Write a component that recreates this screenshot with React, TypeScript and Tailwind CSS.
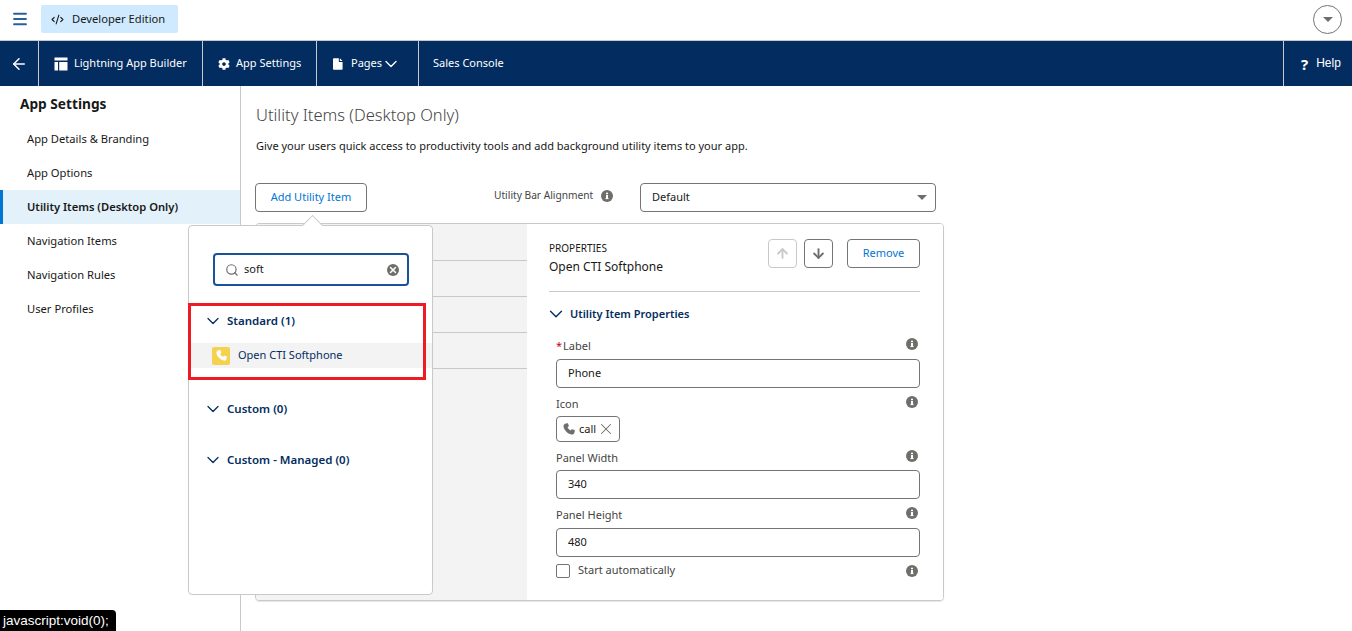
import React from "react";
import { ChevronDown, ArrowLeft, ArrowUp, ArrowDown, Search, X, Menu, CodeXml } from "lucide-react";
import { FaCog } from "react-icons/fa";

const Info = ({ className = "" }: { className?: string }) => (
  <svg viewBox="0 0 12 12" className={"w-3 h-3 shrink-0 " + className}>
    <circle cx="6" cy="6" r="6" fill="#706e6b" />
    <rect x="5" y="5" width="2" height="4" fill="#fff" />
    <rect x="4.4" y="8.2" width="3.2" height="0.9" fill="#fff" />
    <rect x="5" y="2.7" width="2" height="1.5" fill="#fff" />
  </svg>
);

const Phone = ({ className = "", fill = "#fff" }: { className?: string; fill?: string }) => (
  <svg viewBox="0 0 24 24" className={className}>
    <path fill={fill} d="M6.6 2.5 9.3 2c.5 0 .9.2 1.1.7l1.2 3.6c.2.4 0 .9-.3 1.2L9.500 9.200c.9 2.200 2.900 4.300 5.200 5.300l1.700-1.800c.3-.3.8-.4 1.200-.3l3.700 1.200c.4.2.7.6.7 1.100l-.5 2.700c-.6 3.200-3.200 4.600-5.500 4C9.600 19.800 4.200 14.400 2.600 8c-.5-2.300.9-4.900 4-5.500z" />
  </svg>
);

const TableIcon = () => (
  <svg viewBox="0 0 14 14" className="w-[14px] h-[14px] shrink-0">
    <path fill="#fff" d="M0.500 0.500h13v3h-13zM0.500 5h3.500v8.500h-3.500zM5.200 5h8.300v8.500h-8.300z" />
  </svg>
);

const PageIcon = () => (
  <svg viewBox="0 0 12 14" className="w-[10px] h-[12px] shrink-0">
    <path fill="#fff" d="M1 0h6v4.500h4.500V13a1 1 0 0 1-1 1H1a1 1 0 0 1-1-1V1a1 1 0 0 1 1-1zM8.200 0l3.300 3.400H8.200z" />
  </svg>
);

const Caret = () => (
  <span className="block w-0 h-0 border-l-[5px] border-r-[5px] border-t-[5px] border-l-transparent border-r-transparent border-t-[#706e6b]" />
);

const NavCell = ({ children, className = "" }: { children: React.ReactNode; className?: string }) => (
  <div className={"h-full flex items-center border-r border-[#c9c9c9] " + className}>{children}</div>
);

const SideItem = ({ label, active }: { label: string; active?: boolean }) => (
  <div
    className={
      "h-[34px] flex items-center text-[11.2px] text-[#181818] " +
      (active ? "bg-[#e3f1fb] border-l-[3px] border-[#0176d3] pl-[24px] font-semibold" : "pl-[27px]")
    }
  >
    {label}
  </div>
);

const Field = ({
  label,
  value,
  required,
  labelHeight,
  className = "mt-[8px]",
}: {
  label: string;
  value: string;
  required?: boolean;
  labelHeight: string;
  className?: string;
}) => (
  <div className={className}>
    <div className={"flex justify-between items-start text-[11px] text-[#444] ml-[7px] " + labelHeight}>
      <span className="leading-[16px]">
        {required && <span className="text-[#ba0517] mr-[1px]">*</span>}
        {label}
      </span>
      <Info className="mr-[2px]" />
    </div>
    <div className="ml-[7px] h-[29px] border border-[#747474] rounded-[4px] flex items-center pl-[11px] text-[11px] text-[#181818] bg-white">
      {value}
    </div>
  </div>
);

const Section = ({ label, className = "" }: { label: string; className?: string }) => (
  <div className={"flex items-center pl-[14px] text-[11.5px] font-semibold text-[#032d60] " + className}>
    <ChevronDown size={20} strokeWidth={1.5} className="mr-[4px] text-[#032d60]" />
    {label}
  </div>
);

export default function App() {
  return (
    <div
      className="relative w-[1352px] h-[631px] overflow-hidden bg-white text-[#181818]"
      style={{ fontFamily: '"Noto Sans", "Open Sans", sans-serif' }}
    >
      {/* Top bar */}
      <div className="h-[41px] border-b border-[#c9c9c9] flex items-center pl-[11px] pr-[10px]">
        <Menu size={18} strokeWidth={2.4} className="text-[#2a5f9e] mb-[2px]" />
        <div className="ml-[12px] w-[137px] h-[28px] mb-[2px] rounded-[2px] bg-[#cfe9fe] flex items-center pl-[10px] gap-[8px] text-[11.2px]">
          <CodeXml size={13} strokeWidth={2} />
          Developer Edition
        </div>
        <div className="ml-auto w-[29px] h-[29px] mb-[2px] rounded-full border border-[#747474] flex items-center justify-center">
          <Caret />
        </div>
      </div>

      {/* Nav */}
      <div className="h-[45px] bg-[#032d60] flex items-center text-white text-[11px]">
        <NavCell className="w-[39px] justify-center">
          <ArrowLeft size={18} strokeWidth={2} />
        </NavCell>
        <NavCell className="w-[164px] pl-[15px] gap-[6px]">
          <TableIcon />
          Lightning App Builder
        </NavCell>
        <NavCell className="w-[114px] pl-[15px] gap-[6px]">
          <FaCog size={12} />
          App Settings
        </NavCell>
        <NavCell className="w-[102px] pl-[16px] gap-[8px]">
          <PageIcon />
          <span>Pages</span>
          <ChevronDown size={20} strokeWidth={1.6} className="-ml-[9px]" />
        </NavCell>
        <div className="pl-[14px]">Sales Console</div>
        <div className="ml-auto h-full w-[69px] border-l border-[#c9c9c9] flex items-center pl-[17px] gap-[8px]">
          <span className="font-bold text-[15px] leading-none mt-[2px]">?</span>
          <span className="text-[12px] -mt-[1px]" style={{ fontFamily: '"Liberation Sans", sans-serif' }}>Help</span>
        </div>
      </div>

      {/* Body */}
      <div className="flex h-[545px]">
        <aside className="w-[241px] shrink-0 border-r border-[#c9c9c9]">
          <div className="pl-[20px] pt-[8px] h-[36px] text-[13.7px] font-bold text-[#181818] leading-[19px]">App Settings</div>
          <div>
            <SideItem label="App Details & Branding" />
            <SideItem label="App Options" />
            <SideItem label="Utility Items (Desktop Only)" active />
            <SideItem label="Navigation Items" />
            <SideItem label="Navigation Rules" />
            <SideItem label="User Profiles" />
          </div>
        </aside>

        <main className="pl-[14px] flex-1">
          <h1 className="mt-[17px] ml-[1px] h-[24px] text-[16.5px] leading-[24px] font-light text-[#444]">
            Utility Items (Desktop Only)
          </h1>
          <p className="mt-[11px] ml-[1px] h-[18px] text-[11px] leading-[16px] text-[#181818]">
            Give your users quick access to productivity tools and add background utility items to your app.
          </p>

          <div className="mt-[27px] flex items-start h-[29px]">
            <button className="w-[112px] h-[29px] rounded-[4px] border border-[#747474] text-[11px] text-[#0176d3] bg-white">
              Add Utility Item
            </button>
            <div className="ml-[127px] w-[146px] h-[25px] flex items-center text-[10.2px] text-[#444]">
              <span>Utility Bar Alignment</span>
              <Info className="ml-[8px]" />
            </div>
            <div className="w-[296px] h-[29px] border border-[#747474] rounded-[4px] flex items-center justify-between pl-[11px] pr-[8px] text-[11px]">
              Default
              <Caret />
            </div>
          </div>

          {/* Panel */}
          <div className="mt-[11px] w-[689px] h-[378px] border border-[#c9c9c9] rounded-[4px] flex overflow-hidden shadow-[0_1px_1px_rgba(0,0,0,0.1)]">
            <div className="w-[271px] bg-[#f3f3f3] pt-[36px]">
              <div className="h-[37px] border-y border-[#c9c9c9]" />
              <div className="h-[36px] border-b border-[#c9c9c9]" />
              <div className="h-[36px] border-b border-[#c9c9c9]" />
            </div>
            <div className="flex-1 pl-[22px] pr-[23px] bg-white">
              <div className="h-[68px] border-b border-[#c9c9c9] flex items-start">
                <div className="pt-[17px]">
                  <div className="text-[10px] leading-[14px] text-[#181818]">PROPERTIES</div>
                  <div className="text-[12px] leading-[17px] mt-[3px] text-[#181818]">Open CTI Softphone</div>
                </div>
                <div className="ml-auto mt-[15px] flex">
                  <div className="w-[29px] h-[29px] border border-[#c9c9c9] rounded-[4px] flex items-center justify-center text-[#c9c9c9]">
                    <ArrowUp size={15} strokeWidth={3} />
                  </div>
                  <div className="ml-[7px] w-[29px] h-[29px] border border-[#747474] rounded-[4px] flex items-center justify-center text-[#706e6b]">
                    <ArrowDown size={15} strokeWidth={3} />
                  </div>
                  <div className="ml-[14px] w-[73px] h-[29px] border border-[#747474] rounded-[4px] flex items-center justify-center text-[11px] text-[#0176d3]">
                    Remove
                  </div>
                </div>
              </div>
              <div className="flex items-center h-[18px] mt-[13px] text-[11px] font-semibold text-[#032d60]">
                <ChevronDown size={22} strokeWidth={1.5} className="-ml-[4px] mr-[3px]" />
                Utility Item Properties
              </div>
              <Field className="mt-[15px]" label="Label" value="Phone" required labelHeight="h-[21px]" />
              <div className="mt-[8px] flex justify-between items-start h-[20px] text-[11px] text-[#444] ml-[7px]">
                <span className="leading-[16px]">Icon</span>
                <Info className="mr-[2px]" />
              </div>
              <div className="ml-[7px] w-[64px] h-[26px] border border-[#747474] rounded-[4px] flex items-center pl-[5px] text-[11px]">
                <Phone className="w-[14px] h-[14px] shrink-0" fill="#706e6b" />
                <span className="ml-[3px]">call</span>
                <X size={18} strokeWidth={1.4} className="ml-[1px] text-[#706e6b]" />
              </div>
              <Field label="Panel Width" value="340" labelHeight="h-[20px]" />
              <Field label="Panel Height" value="480" labelHeight="h-[21px]" />
              <div className="mt-[6px] ml-[7px] flex items-center h-[15px] text-[11px] text-[#444]">
                <span className="w-[14px] h-[14px] border border-[#747474] rounded-[2px] mr-[8px]" />
                Start automatically
                <Info className="ml-auto mr-[2px]" />
              </div>
            </div>
          </div>
        </main>
      </div>

      {/* Popover */}
      <div className="absolute left-[188px] top-[225px] w-[245px] h-[370px] bg-white border border-[#c9c9c9] rounded-[4px]">
        <span className="absolute left-[116px] -top-[8px] w-[15px] h-[15px] rotate-45 bg-white border-l border-t border-[#c9c9c9]" />
        <div className="relative ml-[24px] mt-[27px] w-[196px] h-[33px] border-2 border-[#1b5297] rounded-[4px] flex items-center pl-[10px] pr-[8px] text-[11px] bg-white">
          <Search size={14} strokeWidth={2} className="text-[#706e6b]" />
          <span className="ml-[5px]">soft</span>
          <span className="ml-auto w-[12px] h-[12px] rounded-full bg-[#706e6b] flex items-center justify-center">
            <X size={10} strokeWidth={3.5} className="text-white" />
          </span>
        </div>
        <Section label="Standard (1)" className="mt-[26px] h-[18px]" />
        <div className="mt-[13px] h-[25px] bg-[#f3f3f3] flex items-center pl-[23px] text-[11px] text-[#032d60]">
          <span className="w-[18px] h-[18px] rounded-[2px] bg-[#f4d14f] flex items-center justify-center">
            <Phone className="w-[13px] h-[13px]" />
          </span>
          <span className="ml-[8px]">Open CTI Softphone</span>
        </div>
        <Section label="Custom (0)" className="mt-[32px] h-[18px]" />
        <Section label="Custom - Managed (0)" className="mt-[33px] h-[18px]" />
      </div>

      {/* Red highlight */}
      <div className="absolute left-[188px] top-[303px] w-[238px] h-[77px] border-[3px] border-[#ed1c24]" />

      {/* Status tooltip */}
      <div className="absolute left-0 bottom-0 w-[116px] h-[21px] bg-black rounded-tr-[4px] text-white text-[13.5px] leading-[21px] pl-[3px]" style={{ fontFamily: '"Liberation Sans", sans-serif' }}>
        javascript:void(0);
      </div>
    </div>
  );
}
